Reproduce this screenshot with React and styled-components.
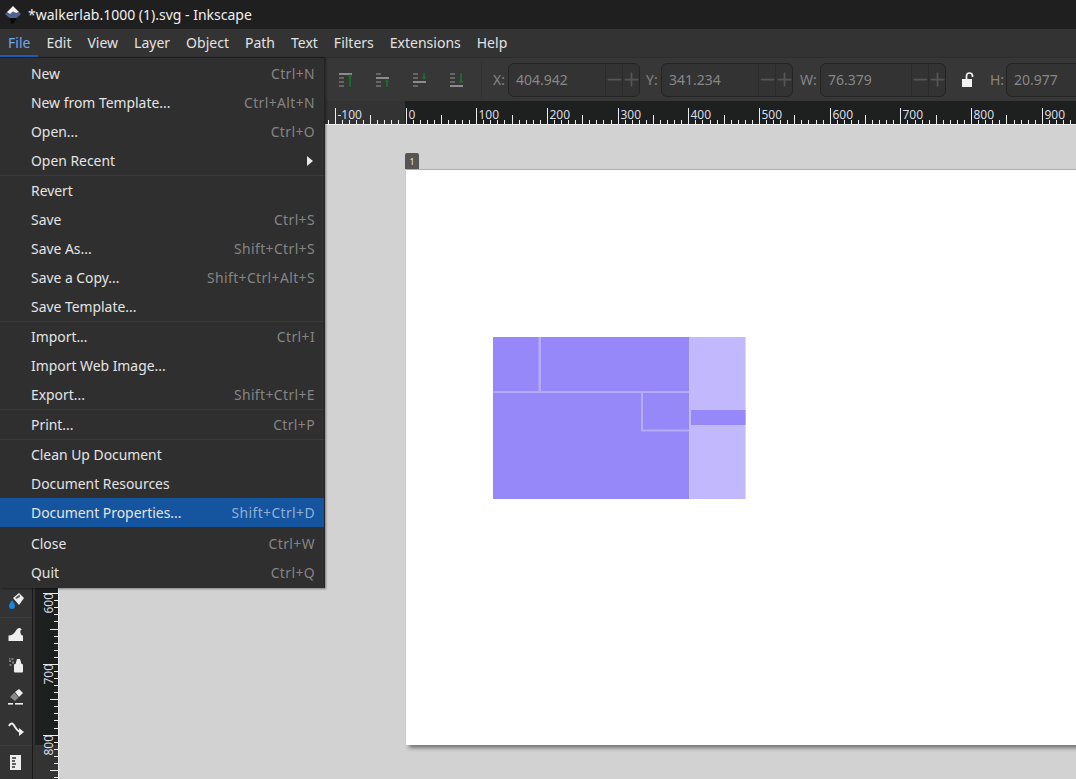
import * as React from "react"
import styled, { createGlobalStyle } from "styled-components"
import { Minus, Plus } from "lucide-react"

const GlobalStyle = createGlobalStyle`
  html, body {
    margin: 0;
    height: 100%;
    overflow: hidden;
    background: #333;
    font-family: "Noto Sans", "Open Sans", sans-serif;
  }
`

const Window = styled.div`
  position: relative;
  width: 1076px;
  height: 779px;
  display: flex;
  flex-direction: column;
  overflow: hidden;
`

const TitleBar = styled.div`
  height: 29px;
  flex-shrink: 0;
  display: flex;
  align-items: center;
  gap: 6px;
  padding-left: 4px;
  background: #1f1f1f;
  color: #f0f0f0;
  font-size: 14px;
`

const MenuBar = styled.div`
  height: 28px;
  flex-shrink: 0;
  display: flex;
  background: #333;
`

const MenuTitle = styled.div`
  padding: 0 8px;
  line-height: 28px;
  font-size: 14px;
  color: ${({ $open }) => ($open ? "#6fa8e8" : "#e2e2e2")};
  box-shadow: ${({ $open }) => ($open ? "inset 0 -2px 0 #1a5fb4" : "none")};
`

const Toolbar = styled.div`
  height: 44px;
  flex-shrink: 0;
  display: flex;
  align-items: center;
  padding-left: 338px;
  background: #373737;
  border-top: 1px solid #2c2c2c;
  box-sizing: border-box;
`

const AlignGroup = styled.div`
  display: flex;
  gap: 21px;
  padding-right: 16px;
  margin-right: 11px;
  border-right: 1px solid #303030;
  height: 36px;
  align-items: center;
`

const FieldLabel = styled.span`
  font-size: 14px;
  color: #858585;
  margin: 0 3px 0 ${({ $gap }) => $gap}px;
  width: ${({ $w }) => $w}px;
  flex-shrink: 0;
`

const Field = styled.div`
  width: ${({ $w }) => $w}px;
  height: 34px;
  flex-shrink: 0;
  box-sizing: border-box;
  display: flex;
  align-items: center;
  border: 1px solid #242424;
  border-radius: 6px;
  background: #333;
  color: #878787;
  font-size: 14px;
`

const FieldValue = styled.span`
  flex: 1;
  padding-left: 7px;
`

const StepButton = styled.span`
  width: 17px;
  height: 32px;
  flex-shrink: 0;
  display: flex;
  align-items: center;
  justify-content: center;
  border-left: 1px solid #2b2b2b;
  box-sizing: border-box;
  color: #565656;

  svg {
    flex-shrink: 0;
  }
`

const LockWrap = styled.span`
  display: flex;
  margin: 0 15px 0 15px;
  flex-shrink: 0;
`

const RulerTop = styled.svg`
  display: block;
  flex-shrink: 0;
  font-family: "Noto Sans", sans-serif;
`

const Workspace = styled.div`
  flex: 1;
  display: flex;
  min-height: 0;
`

const Toolbox = styled.div`
  width: 32px;
  flex-shrink: 0;
  display: flex;
  flex-direction: column;
  justify-content: flex-end;
  padding-bottom: 2px;
  background: #333;
  border-right: 1px solid #1a1a1a;
  margin-right: 2px;
`

const ToolButton = styled.div`
  height: 32px;
  display: flex;
  align-items: center;
  justify-content: center;
  border-top: ${({ $divider }) => ($divider ? "1px solid #3d3d3d" : "none")};
  box-sizing: border-box;
`

const RulerSide = styled.svg`
  display: block;
  flex-shrink: 0;
  font-family: "Noto Sans", sans-serif;
`

const Canvas = styled.div`
  position: relative;
  flex: 1;
  background: #d2d2d2;
  overflow: hidden;
`

const Page = styled.div`
  position: absolute;
  left: 347px;
  top: 45px;
  width: 800px;
  height: 575px;
  background: #fff;
  box-shadow: 0 -1px 0 #b0b0b0, 3px 3px 4px rgba(0, 0, 0, 0.45);
`

const PageTab = styled.div`
  position: absolute;
  left: 346px;
  top: 28px;
  width: 14px;
  height: 16px;
  border-radius: 2px 2px 0 0;
  background: #555;
  color: #eee;
  font-size: 8px;
  line-height: 18px;
  text-align: center;
`

const Artwork = styled.svg`
  position: absolute;
  left: 87px;
  top: 167px;
`

const Menu = styled.div`
  position: absolute;
  left: 0;
  top: 57px;
  width: 325px;
  box-sizing: border-box;
  padding: 1px 0 1px;
  background: #2f2f2f;
  border-top: 1px solid #1c1c1c;
  border-right: 1px solid #232323;
  box-shadow: 1px 1px 2px rgba(0, 0, 0, 0.4);
`

const MenuRow = styled.div`
  height: 29px;
  display: flex;
  align-items: center;
  justify-content: space-between;
  padding: 0 9px 0 31px;
  font-size: 13.9px;
  color: #e4e4e4;
  background: ${({ $active }) => ($active ? "#15549f" : "transparent")};
`

const Shortcut = styled.span`
  letter-spacing: 0.4px;
  color: ${({ $active }) => ($active ? "#8fb0d6" : "#858585")};
`

const Arrow = styled.span`
  width: 0;
  height: 0;
  border-left: 6px solid #e8e8e8;
  border-top: 5.5px solid transparent;
  border-bottom: 5.5px solid transparent;
  margin-right: 2px;
`

const Separator = styled.div`
  height: ${({ $tall }) => ($tall ? 2 : 1)}px;
  background: ${({ $tall }) => ($tall ? "transparent" : "#3a3a3a")};
`

const InkscapeLogo = () => (
  <svg width="18" height="20" viewBox="0 0 18 20">
    <path d="M1 9 L3 7 L6 9 L9 6.5 L12 8 L15 7 L17 9 L12 13.5 H6 Z" fill="#4f6390" />
    <path d="M9 1 L15 7 L12 8 L9 6.5 L6 9 L3 7 Z" fill="#f4f4f4" />
    <path d="M5 13 H13 L11.5 15.5 H10.5 L10 18.5 H6.5 L7.5 15.5 H6.5 Z" fill="#0a0a0a" />
  </svg>
)

const AlignIcon = ({ longRow, arrow }) => (
  <svg width="16" height="16" viewBox="0 0 16 16">
    {[0, 4, 8, 12].map(y => (
      <rect
        key={y}
        x="1"
        y={y + 1}
        width={y / 4 === longRow ? 13 : 5}
        height="2"
        fill={y / 4 === longRow ? "#8c8c8c" : "#666"}
      />
    ))}
    <path d={arrow} fill="#1c6a2b" />
  </svg>
)

const LockIcon = () => (
  <svg width="14" height="16" viewBox="0 0 14 16">
    <rect x="1" y="7" width="10" height="8" fill="#f2f2f2" />
    <path d="M5.5 7 V4 a3 3 0 0 1 6 0 V5" fill="none" stroke="#f2f2f2" strokeWidth="1.7" />
  </svg>
)

const BucketIcon = () => (
  <svg width="20" height="20" viewBox="0 0 20 20">
    <path d="M7 7 L13 2 L18 7 L13 14 Z" fill="#eee" />
    <path d="M9.5 6.5 L13.5 3.5 L14 6 L10 8 Z" fill="#555" />
    <path d="M6 9 C8 12 9 13 9 15 A3 3 0 0 1 3 15 C3 13 5 11 6 9 Z" fill="#1787e0" />
  </svg>
)

const TweakIcon = () => (
  <svg width="20" height="20" viewBox="0 0 20 20">
    <path d="M2.5 17 V11.5 C6 11.5 8 10 10 6.5 C11.5 3.5 14 3 16 5.5 C14.5 5.5 14 7 14.5 9 C15 11 16 11.5 17 11.5 V17 Z" fill="#eee" />
  </svg>
)

const SprayIcon = () => (
  <svg width="20" height="20" viewBox="0 0 20 20">
    <rect x="8" y="9" width="9" height="8.5" rx="1" fill="#eee" />
    <path d="M9.5 9 L11 4 H14 L15.5 9 Z" fill="#eee" />
    <g fill="#7d7d7d">
      <rect x="3" y="5" width="2" height="2" />
      <rect x="5.5" y="3" width="2" height="2" />
      <rect x="6" y="6.5" width="2" height="2" />
      <rect x="3.5" y="9" width="2" height="2" />
      <rect x="3" y="3" width="1.5" height="1.5" />
    </g>
  </svg>
)

const EraserIcon = () => (
  <svg width="20" height="20" viewBox="0 0 20 20">
    <path d="M9 5 L13 2 L17 6 L13 10 Z" fill="#eee" />
    <path d="M8.5 5.5 L12.5 10.5 L9 14 L4 10 Z" fill="#8a8a8a" />
    <rect x="2" y="16" width="5" height="1.6" fill="#eee" />
    <rect x="9" y="16" width="8" height="1.6" fill="#eee" />
  </svg>
)

const ConnectorIcon = () => (
  <svg width="20" height="20" viewBox="0 0 20 20">
    <path d="M3 7 C5 3 7 4 9 8 C11 11 12 13 15 13" fill="none" stroke="#eee" strokeWidth="2" />
    <path d="M13 9 L18 13 L13 17 Z" fill="#eee" />
  </svg>
)

const DocIcon = () => (
  <svg width="20" height="20" viewBox="0 0 20 20">
    <path d="M4 3 H15 V18 H4 Z" fill="#eee" />
    <path d="M6 6 H10 M6 9 H9 M6 12 H10 M6 15 H9" stroke="#333" strokeWidth="1.3" />
  </svg>
)

const ALIGN_ICONS = [
  { longRow: 0, arrow: "M9.5 5 L12 2 L14.5 5 H13 V15 H11 V5 Z" },
  { longRow: 1, arrow: "M9.5 10 L12 7 L14.5 10 H13 V15 H11 V10 Z" },
  { longRow: 2, arrow: "M11 1 H13 V5 H14.5 L12 8 L9.5 5 H11 Z" },
  { longRow: 3, arrow: "M11 1 H13 V9 H14.5 L12 12 L9.5 9 H11 Z" },
]

const MENU_GROUPS = [
  [["New", "Ctrl+N"], ["New from Template...", "Ctrl+Alt+N"], ["Open...", "Ctrl+O"], ["Open Recent", null, true]],
  [["Revert"], ["Save", "Ctrl+S"], ["Save As...", "Shift+Ctrl+S"], ["Save a Copy...", "Shift+Ctrl+Alt+S"], ["Save Template..."]],
  [["Import...", "Ctrl+I"], ["Import Web Image..."], ["Export...", "Shift+Ctrl+E"]],
  [["Print...", "Ctrl+P"]],
  [["Clean Up Document"], ["Document Resources"], ["Document Properties...", "Shift+Ctrl+D"]],
  [["Close", "Ctrl+W"], ["Quit", "Ctrl+Q"]],
]

const MENU_TITLES = ["File", "Edit", "View", "Layer", "Object", "Path", "Text", "Filters", "Extensions", "Help"]

// 100 user units = 70.7px on screen
const UNIT = 0.707

function HorizontalRuler() {
  const zero = 405.5
  const ticks = []
  for (let u = -140; u <= 950; u += 10) {
    const x = Math.round(zero + u * UNIT) + 0.5
    const major = u % 100 === 0
    const mid = u % 50 === 0
    const h = major ? 16 : mid ? 9 : 4
    ticks.push(<line key={u} x1={x} x2={x} y1={23 - h} y2={23} stroke="#eee" />)
    if (major) {
      ticks.push(
        <text key={"t" + u} x={x + 2} y={18} fontSize="12" fill="#d6dde6">{u}</text>
      )
    }
  }
  return (
    <RulerTop width="1076" height="24" viewBox="0 0 1076 24">
      <rect width="1076" height="24" fill="#333" />
      <rect x="405" width="671" height="24" fill="#1e1f1f" />
      {ticks}
      <rect y="23" width="1076" height="1" fill="#eee" />
    </RulerTop>
  )
}

function VerticalRuler() {
  const zero = 44
  const ticks = []
  for (let u = 0; u <= 860; u += 10) {
    const y = Math.round(zero + u * UNIT) + 0.5
    const major = u % 100 === 0
    const mid = u % 50 === 0
    const w = major ? 16 : mid ? 9 : 5
    ticks.push(<line key={u} x1={24 - w} x2={24} y1={y} y2={y} stroke="#eee" />)
    if (major) {
      ticks.push(
        <text
          key={"t" + u}
          transform={`translate(18 ${y + 20}) rotate(-90)`}
          fontSize="12"
          fill="#d6dde6"
        >
          {u}
        </text>
      )
    }
  }
  return (
    <RulerSide width="24" height="654" viewBox="0 0 24 654">
      <rect width="24" height="654" fill="#333" />
      <rect width="24" height="620" fill="#1e1f1f" />
      {ticks}
      <rect x="23" width="1" height="654" fill="#eee" />
    </RulerSide>
  )
}

function Spin({ value, width }) {
  return (
    <Field $w={width}>
      <FieldValue>{value}</FieldValue>
      <StepButton><Minus size={21} strokeWidth={2} /></StepButton>
      <StepButton><Plus size={21} strokeWidth={2} /></StepButton>
    </Field>
  )
}

export default function App() {
  return (
    <Window>
      <GlobalStyle />
      <TitleBar>
        <InkscapeLogo />
        <span>*walkerlab.1000 (1).svg - Inkscape</span>
      </TitleBar>
      <MenuBar>
        {MENU_TITLES.map((t, i) => (
          <MenuTitle key={t} $open={i === 0}>{t}</MenuTitle>
        ))}
      </MenuBar>
      <Toolbar>
        <AlignGroup>
          {ALIGN_ICONS.map((a, i) => (
            <AlignIcon key={i} {...a} />
          ))}
        </AlignGroup>
        <FieldLabel $gap={0} $w={12}>X:</FieldLabel>
        <Spin value="404.942" width={132} />
        <FieldLabel $gap={6} $w={12}>Y:</FieldLabel>
        <Spin value="341.234" width={132} />
        <FieldLabel $gap={7} $w={17}>W:</FieldLabel>
        <Spin value="76.379" width={126} />
        <LockWrap><LockIcon /></LockWrap>
        <FieldLabel $gap={0} $w={13}>H:</FieldLabel>
        <Spin value="20.977" width={132} />
      </Toolbar>
      <HorizontalRuler />
      <Workspace>
        <Toolbox>
          <ToolButton><BucketIcon /></ToolButton>
          <ToolButton $divider><TweakIcon /></ToolButton>
          <ToolButton><SprayIcon /></ToolButton>
          <ToolButton><EraserIcon /></ToolButton>
          <ToolButton><ConnectorIcon /></ToolButton>
          <ToolButton $divider><DocIcon /></ToolButton>
        </Toolbox>
        <VerticalRuler />
        <Canvas>
          <PageTab>1</PageTab>
          <Page>
            <Artwork width="253" height="163" viewBox="493 337 253 163">
              <rect x="493" y="337" width="196.5" height="162" fill="#9688f8" />
              <rect x="689.5" y="337" width="56" height="162" fill="#c1b8fd" />
              <rect x="691" y="410" width="54.5" height="15" fill="#9688f8" />
              <g fill="#b5aafb">
                <rect x="538.5" y="337" width="2.5" height="54" />
                <rect x="493" y="391" width="196.5" height="2" />
                <rect x="641" y="393" width="2" height="38" />
                <rect x="641" y="429.5" width="48.5" height="2" />
              </g>
            </Artwork>
          </Page>
        </Canvas>
      </Workspace>
      <Menu>
        {MENU_GROUPS.map((group, g) => (
          <React.Fragment key={g}>
            {g > 0 && <Separator $tall={g === MENU_GROUPS.length - 1} />}
            {group.map(([label, keys, sub]) => {
              const active = label === "Document Properties..."
              return (
                <MenuRow key={label} $active={active}>
                  <span>{label}</span>
                  {keys && <Shortcut $active={active}>{keys}</Shortcut>}
                  {sub && <Arrow />}
                </MenuRow>
              )
            })}
          </React.Fragment>
        ))}
      </Menu>
    </Window>
  )
}
